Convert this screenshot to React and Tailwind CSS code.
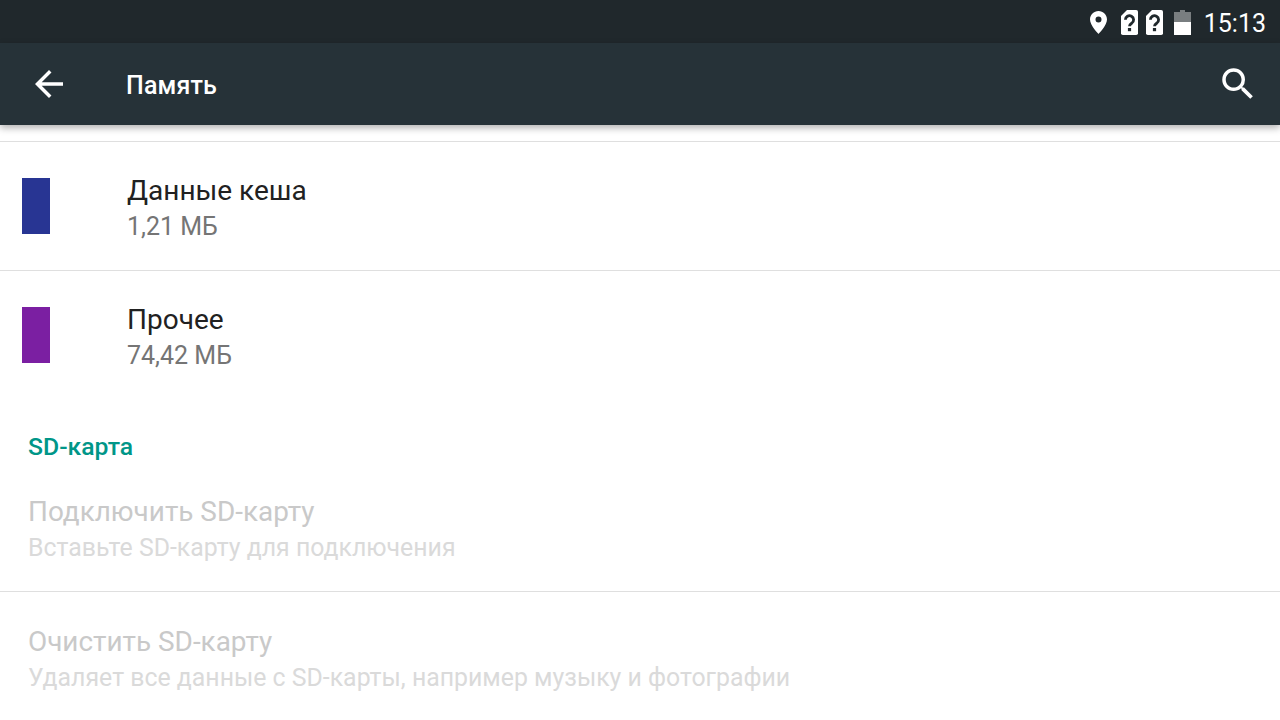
const SimIcon = () => (
    <svg width="17" height="25" viewBox="0 0 17 25">
        <path d="M6 0H15.200a1.800 1.800 0 0 1 1.800 1.800V23.200a1.800 1.800 0 0 1-1.800 1.800H1.800a1.800 1.800 0 0 1-1.800-1.800V6Z" fill="#fff" />
        <path d="M4.400 9.800a4.100 4.100 0 1 1 6.400 3.400c-1.500 1-2.300 1.500-2.300 3.100" fill="none" stroke="#20282c" strokeWidth="2.800" />
        <rect x="6.900" y="18" width="3.200" height="3.200" fill="#20282c" />
    </svg>
);

const Row = ({ color, title, sub, line }) => (
    <div className={`h-[129px] flex items-center border-b ${line ? "border-[#dfdfdf]" : "border-transparent"}`}>
        <div className={`w-7 h-14 ml-[22px] ${color}`} />
        <div className="ml-[77px] pt-[6px] flex flex-col">
            <div className="text-[28px] leading-9 text-[#212121]">{title}</div>
            <div className="text-[25px] leading-9 text-[#757575]">{sub}</div>
        </div>
    </div>
);

const DisabledRow = ({ title, sub, line }) => (
    <div className={`h-[129px] pl-7 pt-[6px] flex flex-col justify-center ${line ? "border-b border-[#dfdfdf]" : ""}`}>
        <div className="text-[27.9px] leading-9 text-[#c9c9c9]">{title}</div>
        <div className="text-[24.85px] leading-9 text-[#dadada]">{sub}</div>
    </div>
);

export default function App() {
    return (
        <div className="w-[1280px] h-[720px] overflow-hidden bg-white font-['Roboto',sans-serif]">
            {/* status bar */}
            <div className="h-[43px] bg-[#20282c] flex items-center justify-end pr-[14px] text-white">
                <svg width="17" height="23" viewBox="0 0 17 23" className="mr-[14px] mt-[2px]">
                    <path fillRule="evenodd" d="M8.500 0C3.800 0 0 3.800 0 8.500 0 14.500 8.500 23 8.500 23S17 14.500 17 8.500C17 3.800 13.200 0 8.500 0ZM8.500 11.500a3 3 0 1 1 0-6 3 3 0 0 1 0 6Z" fill="#fff" />
                </svg>
                <div className="mr-[8px] mt-[1px] flex"><SimIcon /></div>
                <div className="mr-[11px] mt-[1px] flex"><SimIcon /></div>
                <svg width="17" height="25" viewBox="0 0 17 25" className="mr-[13px] mt-[1px]">
                    <path d="M6 0h5v2h6v10H0V2h6Z" fill="#fff" fillOpacity="0.4" />
                    <rect x="0" y="12" width="17" height="13" fill="#fff" />
                </svg>
                <span className="pt-[3px] text-[25px] leading-none">15:13</span>
            </div>

            {/* action bar */}
            <div className="h-[82px] bg-[#263238] flex items-center relative shadow-[0_3px_7px_rgba(0,0,0,0.3)]">
                <svg width="42" height="42" viewBox="0 0 24 24" fill="#fff" className="ml-[28px]">
                    <path d="M20 11H7.830l5.590-5.590L12 4l-8 8 8 8 1.410-1.410L7.830 13H20v-2z" />
                </svg>
                <span className="ml-[56px] pt-[3px] text-[25px] tracking-[0.15px] font-medium text-white">Память</span>
                <svg width="42" height="42" viewBox="0 0 24 24" fill="#fff" className="ml-auto mr-[21px]">
                    <path d="M15.500 14h-.79l-.28-.27A6.471 6.471 0 0 0 16 9.500 6.500 6.500 0 1 0 9.500 16c1.610 0 3.090-.59 4.230-1.570l.27.28v.79l5 4.990L20.490 19l-4.990-5zm-6 0C7.010 14 5 11.990 5 9.500S7.010 5 9.500 5 14 7.010 14 9.500 11.990 14 9.500 14z" />
                </svg>
            </div>

            <div className="h-[17px] border-b border-[#dfdfdf]" />

            <Row line color="bg-[#283593]" title="Данные кеша" sub="1,21 МБ" />
            <Row color="bg-[#7b1fa2]" title="Прочее" sub="74,42 МБ" />

            <div className="h-[63px] pt-[23px] pl-7 text-[24.75px] leading-[48px] font-medium text-[#009688]">SD-карта</div>

            <DisabledRow line title="Подключить SD-карту" sub="Вставьте SD-карту для подключения" />
            <DisabledRow title="Очистить SD-карту" sub="Удаляет все данные с SD-карты, например музыку и фотографии" />
        </div>
    );
}
